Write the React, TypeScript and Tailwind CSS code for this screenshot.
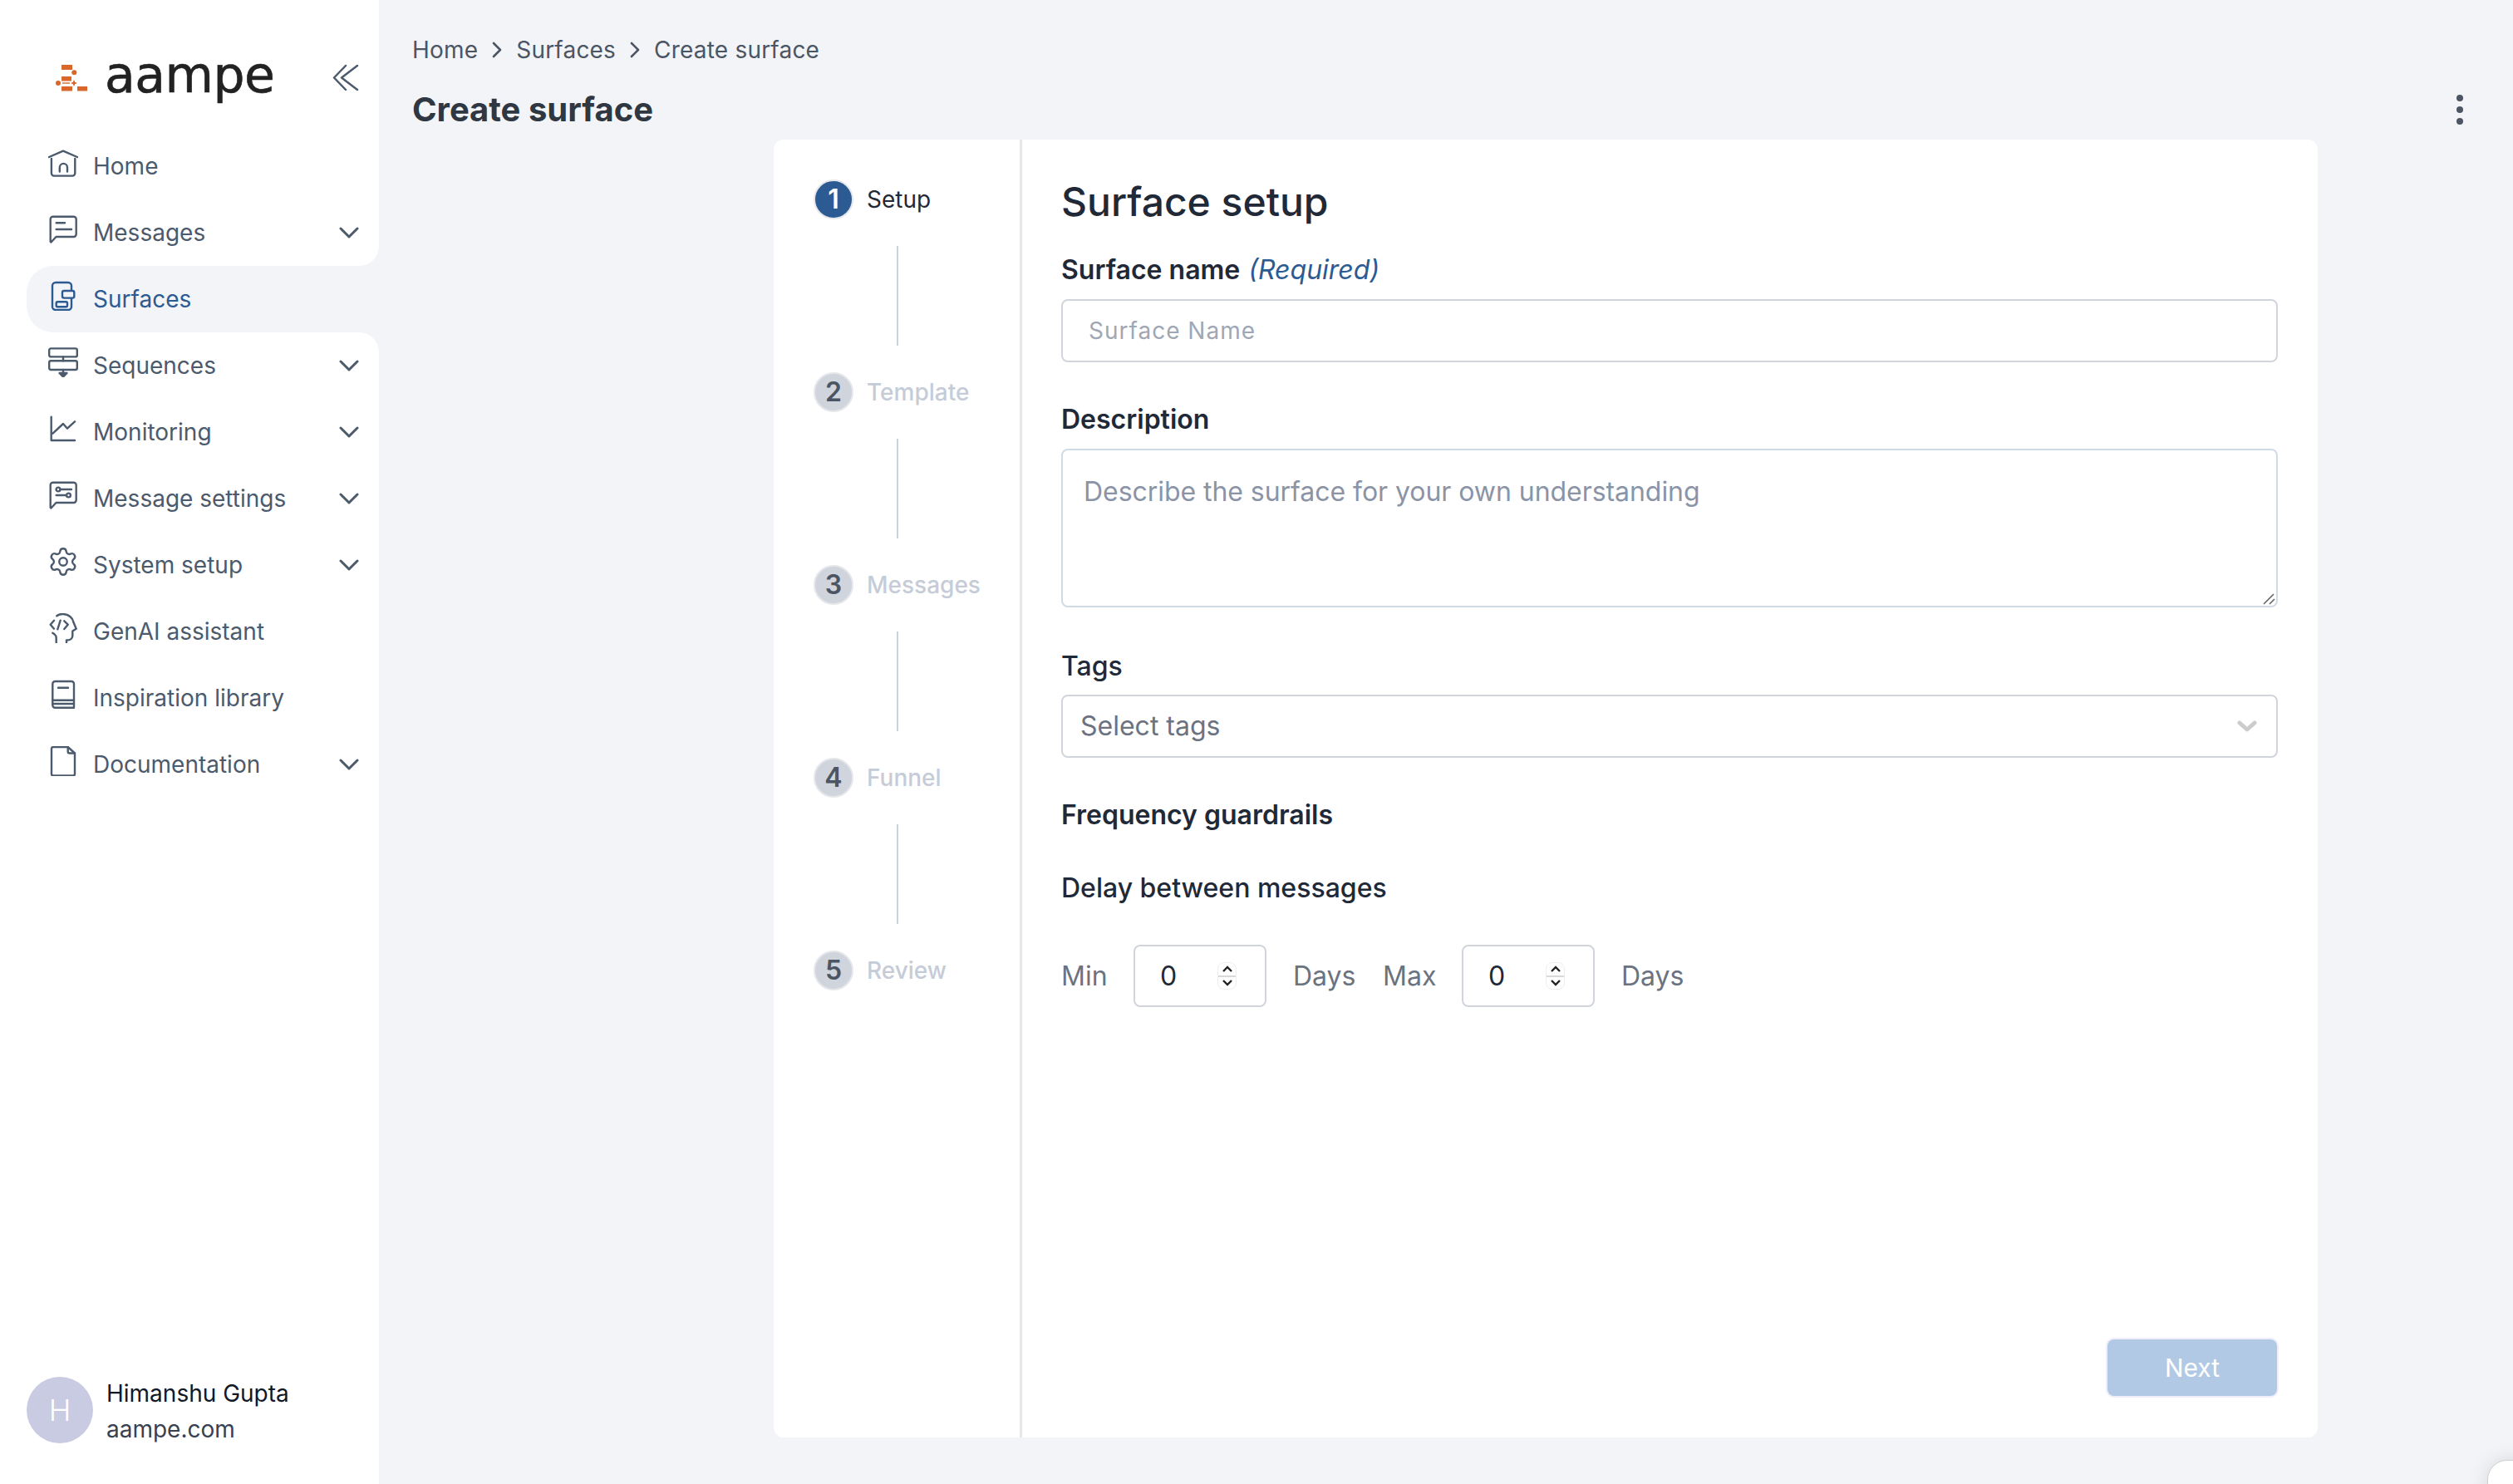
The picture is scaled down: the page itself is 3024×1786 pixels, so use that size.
import { Settings } from "lucide-react";
import type { ReactNode } from "react";

const strokeProps = {
  fill: "none",
  stroke: "currentColor",
  strokeWidth: 2.4,
  strokeLinecap: "round" as const,
  strokeLinejoin: "round" as const,
};

function Icon({ children }: { children: ReactNode }) {
  return (
    <svg viewBox="0 0 36 36" className="mb-[8px] h-[36px] w-[36px] shrink-0" {...strokeProps}>
      {children}
    </svg>
  );
}

const bubble = "M2.7 33V5.7a3 3 0 0 1 3-3h25a3 3 0 0 1 3 3V24a3 3 0 0 1-3 3H9.5L3.5 33.5z";

const icons: Record<string, ReactNode> = {
  home: (
    <Icon>
      <path d="M1 11L18 3.6L35 11" />
      <path d="M3.9 13V30.6a3 3 0 0 0 3 3H29.3a3 3 0 0 0 3-3V13" />
      <path d="M13.8 28.5V23.5a4.6 4.6 0 0 1 9.2 0V28.5" />
    </Icon>
  ),
  messages: (
    <Icon>
      <path d={bubble} />
      <path d="M9.7 10.3H20M9.7 18H28" />
    </Icon>
  ),
  surfaces: (
    <Icon>
      <path d="M28 10.5V6a4 4 0 0 0-4-4H9a4 4 0 0 0-4 4V31a4 4 0 0 0 4 4H24a4 4 0 0 0 4-4V21.5" />
      <rect x="17" y="12" width="14.3" height="8.6" rx="2" />
      <rect x="9.7" y="25.3" width="13.3" height="6" rx="1.5" />
    </Icon>
  ),
  sequences: (
    <Icon>
      <rect x="1.2" y="1.4" width="33.6" height="10" rx="2" />
      <rect x="1.2" y="16.3" width="33.6" height="10.7" rx="2" />
      <path d="M18 11.4V16.3M18 27V31" />
      <path d="M13.5 31H22.5L18 35.5z" fill="currentColor" />
    </Icon>
  ),
  monitoring: (
    <Icon>
      <path d="M3.7 3.7V32H32" />
      <path d="M5.5 23.7L18 12L23 17.7L32 9.3" />
    </Icon>
  ),
  settings: (
    <Icon>
      <path d={bubble} />
      <circle cx="12" cy="11" r="2.4" />
      <path d="M14.5 11H28M9.7 18H22" />
      <circle cx="24.5" cy="18" r="2.4" />
    </Icon>
  ),
  genai: (
    <Icon>
      <path d="M10.3 3.3C12.5 1.5 15 .9 18 1C24.5 1.3 29.5 5.5 30.3 10.5L33.7 18.7L29.3 21.5V27.5C29 30.5 26.5 32.5 22 32.5V35.5" />
      <path d="M7 8.7L2.7 13.7L7 18.7M14.7 8.7L11.3 19.3M19.3 9.3L23.7 13.7L19.3 19M5.3 23.7C8 25.3 9.7 27 9.7 29.5V35.5" />
    </Icon>
  ),
  library: (
    <Icon>
      <path d="M5.3 30V5a3 3 0 0 1 3-3H28a3 3 0 0 1 3 3V33.7H8.3a3 3 0 0 1-3-3z" />
      <path d="M5.3 24.7H31M5.3 29H31M12 9.7H24" />
    </Icon>
  ),
  doc: (
    <Icon>
      <path d="M23.7 1H6a2 2 0 0 0-2 2V33.5a2 2 0 0 0 2 2H30a2 2 0 0 0 2-2V8.5z" />
      <path d="M23.7 1V6.5a2 2 0 0 0 2 2H32" />
    </Icon>
  ),
};

function ChevronDown() {
  return (
    <svg viewBox="0 0 24 14" className="h-[14px] w-[24px]" fill="none" stroke="currentColor" strokeWidth="3" strokeLinecap="round" strokeLinejoin="round">
      <path d="M2 2L12 12L22 2" />
    </svg>
  );
}

function Crumb() {
  return (
    <svg viewBox="0 0 12 20" className="mx-[17px] h-[20px] w-[12px]" fill="none" stroke="currentColor" strokeWidth="2.6" strokeLinecap="round" strokeLinejoin="round">
      <path d="M2 2L10 10L2 18" />
    </svg>
  );
}

const navItems = [
  { key: "home", label: "Home" },
  { key: "messages", label: "Messages", arrow: true, corner: "rounded-br-[24px]" },
  { key: "surfaces", label: "Surfaces", active: true },
  { key: "sequences", label: "Sequences", arrow: true, corner: "rounded-tr-[24px]" },
  { key: "monitoring", label: "Monitoring", arrow: true },
  { key: "settings", label: "Message settings", arrow: true },
  { key: "system", label: "System setup", arrow: true },
  { key: "genai", label: "GenAI assistant" },
  { key: "library", label: "Inspiration library" },
  { key: "doc", label: "Documentation", arrow: true },
];

function NavRow({ item }: { item: (typeof navItems)[number] }) {
  if (item.active) {
    return (
      <div className="bg-white pl-[32px]">
        <div className="flex h-[80px] items-center gap-[18px] rounded-l-[32px] bg-[#f3f4f8] pl-[26px] text-[#2c5a92]">
          {icons[item.key]}
          <span>{item.label}</span>
        </div>
      </div>
    );
  }
  return (
    <div className="bg-[#f3f4f8]">
      <div className={`flex h-[80px] items-center gap-[18px] bg-white pl-[58px] pr-[24px] text-[#4b5a6c] ${item.corner ?? ""}`}>
        {item.key === "system" ? (
          <Settings size={38} strokeWidth={1.5} className="mb-[8px] -ml-[1px] -mr-[1px] shrink-0" />
        ) : (
          icons[item.key]
        )}
        <span className="flex-1">{item.label}</span>
        {item.arrow && <ChevronDown />}
      </div>
    </div>
  );
}

function Sidebar() {
  return (
    <aside className="flex h-full w-[456px] shrink-0 flex-col bg-white text-[28px]">
      <div className="flex h-[160px] items-start pt-[51px]">
        <svg viewBox="0 0 42 36" className="ml-[66px] mt-[25px] h-[36px] w-[42px] shrink-0" fill="#d9662b">
          <rect x="8" y="2" width="13" height="6" />
          <circle cx="23.3" cy="11.3" r="3" />
          <rect x="8" y="16" width="12" height="5.5" />
          <circle cx="4" cy="24" r="3" />
          <rect x="9" y="23.3" width="9" height="1.4" />
          <path d="M23 20L24.2 22.8L27 24L24.2 25.2L23 28L21.8 25.2L19 24L21.8 22.8z" />
          <rect x="8" y="28" width="13" height="5.5" />
          <rect x="27" y="28" width="12" height="5.5" />
        </svg>
        <span className="ml-[18px] mt-[4px] font-['DejaVu_Sans',sans-serif] text-[60px] leading-[70px] tracking-[-0.5px] text-[#222222] [-webkit-text-stroke:0.6px_#222222]">aampe</span>
        <svg viewBox="0 0 32 32" className="ml-[auto] mr-[24px] mt-[26px] h-[32px] w-[32px] text-[#4b5a6c]" fill="none" stroke="currentColor" strokeWidth="2.5" strokeLinecap="round" strokeLinejoin="round">
          <path d="M16 2L2 16.5L16 31M30 2L11 16.5L30 31" />
        </svg>
      </div>
      <nav>
        {navItems.map((item) => (
          <NavRow key={item.key} item={item} />
        ))}
      </nav>
      <div className="mt-auto flex items-center gap-[17px] pb-[44px] pl-[32px]">
        <div className="mb-[4px] flex h-[80px] w-[80px] items-center justify-center rounded-full bg-[#c9cbe3] text-[36px] font-light text-white">H</div>
        <div className="-ml-[1px]">
          <p className="leading-[43px] text-[#111827]">Himanshu Gupta</p>
          <p className="leading-[43px] text-[#374151]">aampe.com</p>
        </div>
      </div>
    </aside>
  );
}

const steps = ["Setup", "Template", "Messages", "Funnel", "Review"];

function Stepper() {
  return (
    <div className="w-[299px] shrink-0 border-r-[3px] border-[#e5e7eb] pl-[48px] pt-[48px]">
      {steps.map((step, i) => (
        <div key={step}>
          <div className="flex h-[48px] items-center gap-[16px]">
            <div
              className={`flex h-[48px] w-[48px] items-center justify-center rounded-full border-[2px] text-[32px] font-semibold ${
                i === 0 ? "border-[#e5e7eb] bg-[#2c5a92] text-white" : "border-[#e5e7eb] bg-[#cfd4dd] text-[#4b5563]"
              }`}
            >
              {i + 1}
            </div>
            <span className={`text-[28px] ${i === 0 ? "text-[#1f2937]" : "font-medium text-[#c5ccd8]"}`}>{step}</span>
          </div>
          {i < steps.length - 1 && <div className="my-[32px] ml-[100px] h-[120px] w-[2px] bg-[#cbd2dc]" />}
        </div>
      ))}
    </div>
  );
}

function NumberBox() {
  return (
    <div className="flex h-[75px] w-[160px] items-center rounded-[8px] border-[2px] border-[#d1d5db] pl-[30px] pr-[34px] text-[#1f2937]">
      <span className="flex-1">0</span>
      <div className="flex h-[33px] w-[23px] flex-col items-center justify-between rounded-[8px] border border-[#eeeeee] bg-white py-[3px] text-[#222222]">
        <svg viewBox="0 0 12 8" className="h-[8px] w-[12px]" fill="none" stroke="currentColor" strokeWidth="2.4">
          <path d="M1 7L6 2L11 7" />
        </svg>
        <div className="h-[2px] w-full bg-[#d9d9d9]" />
        <svg viewBox="0 0 12 8" className="h-[8px] w-[12px]" fill="none" stroke="currentColor" strokeWidth="2.4">
          <path d="M1 1L6 6L11 1" />
        </svg>
      </div>
    </div>
  );
}

function SetupForm() {
  return (
    <div className="flex flex-1 flex-col pl-[47px] pr-[48px] pt-[47px] text-[32px] leading-[40px]">
      <h2 className="text-[48px] font-medium leading-[56px] text-[#1f2937]">Surface setup</h2>
      <label className="mt-[34px] font-semibold text-[#1f2937]">
        Surface name <em className="ml-[2px] font-normal text-[#2c5a92]">(Required)</em>
      </label>
      <input
        placeholder="Surface Name"
        className="mt-[15px] h-[76px] rounded-[8px] border-[2px] border-[#d1d5db] px-[31px] text-[28px] tracking-[1px] outline-none placeholder:text-[#a0a7b4]"
      />
      <label className="mt-[49px] font-semibold text-[#1f2937]">Description</label>
      <div className="relative mt-[15px] flex">
        <textarea
          placeholder="Describe the surface for your own understanding"
          className="h-[191px] w-full resize-none rounded-[8px] border-[2px] border-[#d1dbe6] px-[25px] pt-[30px] text-[32px] leading-[40px] tracking-[-0.05px] outline-none placeholder:text-[#8a94a6]"
        />
        <svg viewBox="0 0 16 16" className="absolute bottom-[2px] right-[2px] h-[16px] w-[16px] text-[#666666]" fill="none" stroke="currentColor" strokeWidth="1.6">
          <path d="M1 14L13 2M8 14L14 8" />
        </svg>
      </div>
      <label className="mt-[51px] font-medium text-[#1f2937]">Tags</label>
      <div className="mt-[14px] flex h-[76px] items-center justify-between rounded-[8px] border-[2px] border-[#d1d5db] pl-[21px] pr-[23px] text-[#6b7280]">
        <span>Select tags</span>
        <svg viewBox="0 0 24 14" className="h-[14px] w-[24px] text-[#cccccc]" fill="none" stroke="currentColor" strokeWidth="5" strokeLinecap="round" strokeLinejoin="round">
          <path d="M3 3L12 11L21 3" />
        </svg>
      </div>
      <p className="mt-[49px] font-semibold text-[#1f2937]">Frequency guardrails</p>
      <p className="mt-[48px] font-medium text-[#1f2937]">Delay between messages</p>
      <div className="mt-[48px] flex items-center text-[#6b7280]">
        <span className="w-[87px]">Min</span>
        <NumberBox />
        <span className="ml-[32px] w-[108px]">Days</span>
        <span className="w-[95px]">Max</span>
        <NumberBox />
        <span className="ml-[32px]">Days</span>
      </div>
      <div className="mt-auto flex justify-end pb-[50px]">
        <button className="mr-[1px] h-[68px] w-[204px] rounded-[8px] bg-[#b2c9e5] text-[30px] text-white ring-2 ring-[#f0eefc]">Next</button>
      </div>
    </div>
  );
}

export default function App() {
  return (
    <div className="relative flex h-[1786px] w-[3024px] overflow-hidden bg-[#f3f4f8] font-['Inter',sans-serif]">
      <Sidebar />
      <main className="flex-1 pl-[40px] pt-[40px]">
        <div className="flex h-[40px] items-center text-[28px] tracking-[0.2px] text-[#4b5563]">
          <span>Home</span>
          <Crumb />
          <span>Surfaces</span>
          <Crumb />
          <span>Create surface</span>
        </div>
        <div className="mt-[24px] flex h-[56px] items-center justify-between pr-[60px]">
          <h1 className="text-[40px] font-bold text-[#2f3742]">Create surface</h1>
          <div className="flex flex-col gap-[6px]">
            <div className="h-[8px] w-[8px] rounded-full bg-[#4b5563]" />
            <div className="h-[8px] w-[8px] rounded-full bg-[#4b5563]" />
            <div className="h-[8px] w-[8px] rounded-full bg-[#4b5563]" />
          </div>
        </div>
        <div className="ml-[435px] mt-[8px] flex h-[1562px] w-[1858px] rounded-[12px] bg-white">
          <Stepper />
          <SetupForm />
        </div>
      </main>
      <div className="absolute left-[2993px] top-[1757px] h-[80px] w-[80px] rounded-[24px] border border-[#d0d0d0] bg-white shadow-[0_0_24px_rgba(0,0,0,0.12)]" />
    </div>
  );
}
